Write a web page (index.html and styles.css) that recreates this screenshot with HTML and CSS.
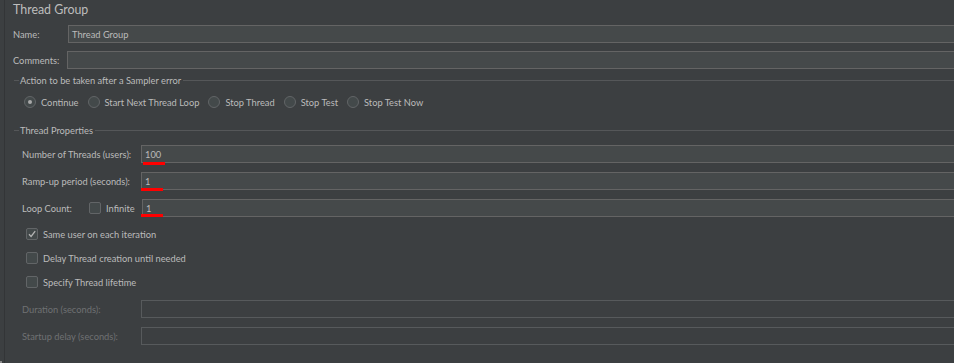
FILE: index.html
```html
<!DOCTYPE html>
<html>
<head>
	<title>Thread Group</title>
	<link rel="stylesheet" href="styles.css">
</head>
<body>
	<div class="panel">
		<div class="panel-title">Thread Group</div>

		<div class="form-row row-name">
			<label class="label label-name">Name:</label>
			<div class="field"><span class="field-text">Thread Group</span></div>
		</div>
		<div class="form-row row-comments">
			<label class="label label-comments">Comments:</label>
			<div class="field"></div>
		</div>

		<div class="group-title group-action"><span>Action to be taken after a Sampler error</span></div>
		<div class="radio-row">
			<span class="radio checked"></span><span class="option">Continue</span>
			<span class="radio"></span><span class="option">Start Next Thread Loop</span>
			<span class="radio"></span><span class="option">Stop Thread</span>
			<span class="radio"></span><span class="option">Stop Test</span>
			<span class="radio"></span><span class="option">Stop Test Now</span>
		</div>

		<div class="group-title group-props"><span>Thread Properties</span></div>
		<div class="props">
			<div class="form-row prop-row first">
				<label class="label label-prop">Number of Threads (users):</label>
				<div class="field"><span class="field-text">100</span><span class="mark mark-threads"></span></div>
			</div>
			<div class="form-row prop-row">
				<label class="label label-prop">Ramp-up period (seconds):</label>
				<div class="field"><span class="field-text">1</span><span class="mark mark-ramp"></span></div>
			</div>
			<div class="form-row prop-row">
				<label class="label label-loop">Loop Count:</label>
				<span class="checkbox"></span><span class="option option-infinite">Infinite</span>
				<div class="field"><span class="field-text">1</span><span class="mark mark-loop"></span></div>
			</div>

			<div class="check-row check-first">
				<span class="checkbox checked">
					<svg width="10" height="10" viewBox="0 0 10 10"><path d="M2 5.2 L4.1 7.4 L8.2 2.2" fill="none" stroke="#b4b4b4" stroke-width="1.3"/></svg>
				</span>
				<span class="option">Same user on each iteration</span>
			</div>
			<div class="check-row">
				<span class="checkbox"></span><span class="option">Delay Thread creation until needed</span>
			</div>
			<div class="check-row">
				<span class="checkbox"></span><span class="option">Specify Thread lifetime</span>
			</div>

			<div class="form-row prop-row lifetime-first">
				<label class="label label-prop disabled">Duration (seconds):</label>
				<div class="field field-disabled"></div>
			</div>
			<div class="form-row prop-row">
				<label class="label label-prop disabled">Startup delay (seconds):</label>
				<div class="field field-disabled"></div>
			</div>
		</div>
	</div>
	<span class="corner"></span>
</body>
</html>
```

FILE: styles.css
```css
html, body {
	margin: 0;
	height: 100%;
	overflow: hidden;
}
body {
	background-color: #3c3f41;
	font-family: Lato, "Noto Sans", sans-serif;
	font-size: 9.3px;
	color: #bbbbbb;
	position: relative;
}
.panel {
	margin-left: 4px;
	border-left: 1px solid #333537;
	height: 100%;
	display: flex;
	flex-direction: column;
}
.panel-title {
	height: 20px;
	line-height: 20px;
	font-size: 12.4px;
	padding-left: 8px;
	color: #bdbdbd;
}

/* rows with a label and a text field */
.form-row {
	display: flex;
	align-items: center;
	height: 18px;
}
.label {
	flex: none;
	white-space: nowrap;
}
.row-name {
	margin-top: 5px;
	padding-left: 8px;
}
.row-comments {
	margin-top: 8px;
	padding-left: 8px;
}
.label-name {
	width: 55px;
}
.label-comments {
	width: 54px;
}
.field {
	flex: 1;
	height: 16px;
	margin-right: -20px;
	background-color: #45494a;
	border: 1px solid #646464;
	position: relative;
	display: flex;
	align-items: center;
}
.field-text {
	padding-left: 3px;
	color: #bbbbbb;
}
.field-disabled {
	background-color: #3c3f41;
	border-color: #575a5c;
}

/* titled borders */
.group-title {
	display: flex;
	align-items: center;
	height: 12px;
	padding-left: 9px;
}
.group-title::before {
	content: "";
	width: 5px;
	height: 1px;
	background-color: #555759;
}
.group-title::after {
	content: "";
	flex: 1;
	height: 1px;
	margin-left: 2px;
	background-color: #555759;
}
.group-title span {
	padding-left: 1px;
}
.group-action {
	margin-top: 5px;
}
.group-props {
	margin-top: 16px;
}

/* radios and checkboxes */
.radio-row {
	display: flex;
	align-items: center;
	height: 12px;
	margin-top: 10px;
	padding-left: 19px;
}
.radio {
	width: 10px;
	height: 10px;
	border: 1px solid #626567;
	background-color: #43494a;
	border-radius: 50%;
	margin-left: 9px;
	margin-right: 5px;
	display: flex;
	align-items: center;
	justify-content: center;
	flex: none;
}
.radio:first-child {
	margin-left: 0;
}
.radio.checked::after {
	content: "";
	width: 4px;
	height: 4px;
	border-radius: 50%;
	background-color: #a9a9a9;
}
.checkbox {
	width: 10px;
	height: 10px;
	border: 1px solid #626567;
	background-color: #43494a;
	border-radius: 2px;
	margin-right: 5px;
	display: flex;
	align-items: center;
	justify-content: center;
	flex: none;
}
.option {
	white-space: nowrap;
}

.props {
	display: flex;
	flex-direction: column;
	padding-left: 17px;
}
.prop-row {
	margin-top: 9px;
}
.label-prop {
	width: 119px;
}
.label-loop {
	width: 67px;
}
.option-infinite {
	width: 36px;
	flex: none;
}
.check-row {
	display: flex;
	align-items: center;
	height: 12px;
	margin-top: 12px;
	padding-left: 4px;
}
.check-first {
	margin-top: 11px;
}
.lifetime-first {
	margin-top: 12px;
}
.disabled {
	color: #6f7173;
}

/* red underline annotations */
.mark {
	position: absolute;
	height: 3px;
	background-color: #ff0000;
}
.mark-threads {
	left: 1px;
	top: 16px;
	width: 22px;
}
.mark-ramp {
	left: -1px;
	top: 15px;
	width: 22px;
}
.mark-loop {
	left: -2px;
	top: 14px;
	width: 22px;
}

.corner {
	position: absolute;
	left: 0;
	bottom: 0;
	width: 2px;
	height: 2px;
	background-color: #8a8a8a;
}
```
